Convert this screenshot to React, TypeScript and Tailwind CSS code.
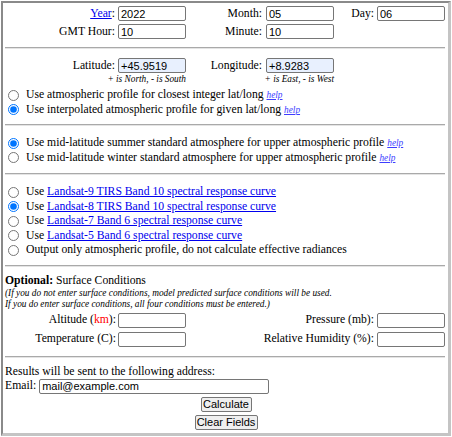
import React from "react";

const inputCls =
  "w-[68px] h-[15px] border border-[#767676] rounded-[2px] bg-white px-[2px] text-[11px] leading-[13px] text-black font-[family-name:Liberation_Sans,Arial,sans-serif] outline-none";

const Help = () => (
  <a href="#" className="text-[9.3px] italic underline text-[#3d3dff]">
    help
  </a>
);

const Rule = () => (
  <div className="ml-[1px] mr-[3px] h-[2px] border-t border-b border-t-[#a9a9a9] border-b-[#e4e4e4]" />
);

interface IRadioRowProps {
  name: string;
  checked?: boolean;
  children: React.ReactNode;
}

const RadioRow: React.FunctionComponent<IRadioRowProps> = ({ name, checked, children }) => (
  <label className="flex items-center h-[14.5px] whitespace-nowrap">
    <input
      type="radio"
      name={name}
      defaultChecked={checked}
      className="m-0 ml-[4px] mr-[7px] w-[11px] h-[11px] shrink-0"
    />
    <span>{children}</span>
  </label>
);

const Lnk = ({ children }: { children: React.ReactNode }) => (
  <a href="#" className="text-[#0000ee] underline">
    {children}
  </a>
);

export default function App() {
  return (
    <div className="w-[452px] h-[437px] bg-white">
      <div className="ml-[1px] mt-[1px] w-[450px] h-[435px] border-t-2 border-l-2 border-r-[3px] border-b-[3px] border-t-[#8a8a8a] border-l-[#8a8a8a] border-r-[#c4c4c4] border-b-[#c4c4c4] pl-[1px] font-[family-name:Liberation_Serif,Times_New_Roman,serif] text-[11.7px] leading-[14px] text-black">
        {/* date */}
        <div className="pt-[3px] grid grid-cols-[114px_68px_80px_68px_43px_68px] gap-y-[3px] items-center">
          <div className="text-right pr-[3px]">
            <Lnk>Year</Lnk>:
          </div>
          <input className={inputCls} defaultValue="2022" />
          <div className="text-right pr-[4px]">Month:</div>
          <input className={inputCls} defaultValue="05" />
          <div className="text-right pr-[3px]">Day:</div>
          <input className={inputCls} defaultValue="06" />
          <div className="text-right pr-[3px]">GMT Hour:</div>
          <input className={inputCls} defaultValue="10" />
          <div className="text-right pr-[4px]">Minute:</div>
          <input className={inputCls} defaultValue="10" />
        </div>

        <div className="mt-[8px]">
          <Rule />
        </div>

        {/* location */}
        <div className="mt-[9px] grid grid-cols-[114px_68px_80px_68px] items-center">
          <div className="text-right pr-[3px]">Latitude:</div>
          <input className={inputCls + " !bg-[#e8f0fe]"} defaultValue="+45.9519" />
          <div className="text-right pr-[4px]">Longitude:</div>
          <input className={inputCls + " !bg-[#e8f0fe]"} defaultValue="+8.9283" />
          <div className="col-span-2 text-right text-[9.3px] leading-[10px] italic whitespace-nowrap mt-[1px]">
            + is North, - is South
          </div>
          <div className="col-span-2 text-right text-[9.3px] leading-[10px] italic whitespace-nowrap mt-[1px]">
            + is East, - is West
          </div>
        </div>

        <div className="mt-[4px]">
          <RadioRow name="prof">
            Use atmospheric profile for closest integer lat/long <Help />
          </RadioRow>
          <RadioRow name="prof" checked>
            Use interpolated atmospheric profile for given lat/long <Help />
          </RadioRow>
        </div>

        <div className="mt-[7px]">
          <Rule />
        </div>

        <div className="mt-[10px]">
          <RadioRow name="std" checked>
            Use mid-latitude summer standard atmosphere for upper atmospheric profile <Help />
          </RadioRow>
          <RadioRow name="std">
            Use mid-latitude winter standard atmosphere for upper atmospheric profile <Help />
          </RadioRow>
        </div>

        <div className="mt-[8px]">
          <Rule />
        </div>

        <div className="mt-[10px]">
          <RadioRow name="band">
            Use <Lnk>Landsat-9 TIRS Band 10 spectral response curve</Lnk>
          </RadioRow>
          <RadioRow name="band" checked>
            Use <Lnk>Landsat-8 TIRS Band 10 spectral response curve</Lnk>
          </RadioRow>
          <RadioRow name="band">
            Use <Lnk>Landsat-7 Band 6 spectral response curve</Lnk>
          </RadioRow>
          <RadioRow name="band">
            Use <Lnk>Landsat-5 Band 6 spectral response curve</Lnk>
          </RadioRow>
          <RadioRow name="band">
            Output only atmospheric profile, do not calculate effective radiances
          </RadioRow>
        </div>

        <div className="mt-[7px]">
          <Rule />
        </div>

        {/* surface */}
        <div className="mt-[7px] pl-[1px]">
          <div>
            <b>Optional:</b> Surface Conditions
          </div>
          <div className="text-[9.3px] leading-[11px] italic whitespace-nowrap">
            (If you do not enter surface conditions, model predicted surface conditions will be used.
            <br />
            If you do enter surface conditions, all four conditions must be entered.)
          </div>
        </div>
        <div className="mt-[3px] grid grid-cols-[114px_68px_191px_68px] gap-y-[4px] items-center">
          <div className="text-right pr-[2px]">
            Altitude (<span className="text-[#ff0000]">km</span>):
          </div>
          <input className={inputCls} />
          <div className="text-right pr-[3px]">Pressure (mb):</div>
          <input className={inputCls} />
          <div className="text-right pr-[2px]">Temperature (C):</div>
          <input className={inputCls} />
          <div className="text-right pr-[3px]">Relative Humidity (%):</div>
          <input className={inputCls} />
        </div>

        <div className="mt-[9px]">
          <Rule />
        </div>

        {/* email */}
        <div className="mt-[7px] pl-[1px]">
          <div>Results will be sent to the following address:</div>
          <div className="flex items-center">
            <span>Email:</span>
            <input
              className={inputCls + " !w-[230px] ml-[3px]"}
              defaultValue="mail@example.com"
            />
          </div>
        </div>

        <div className="mt-[3px] flex flex-col items-center gap-[3px] font-[family-name:Liberation_Sans,Arial,sans-serif] text-[11px]">
          <button className="h-[15px] w-[51px] border border-[#767676] rounded-[2px] bg-[#efefef] leading-[13px] text-black">
            Calculate
          </button>
          <button className="h-[15px] w-[63px] border border-[#767676] rounded-[2px] bg-[#efefef] leading-[13px] text-black">
            Clear Fields
          </button>
        </div>
      </div>
    </div>
  );
}
